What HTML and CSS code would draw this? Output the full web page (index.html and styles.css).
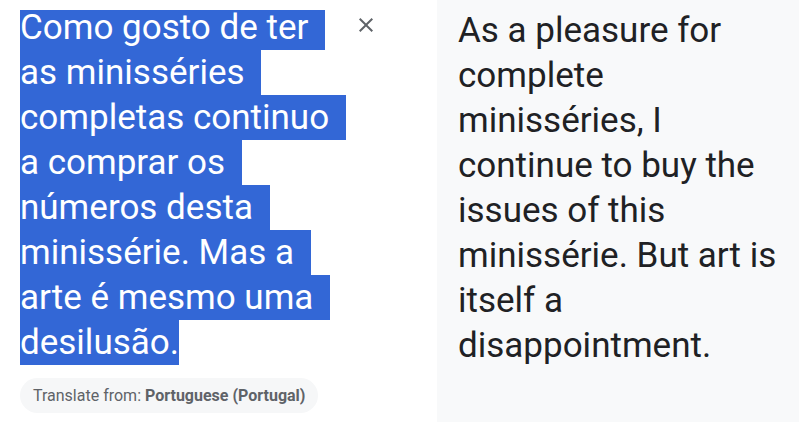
FILE: index.html
```html
<!DOCTYPE html>
<html>
<head>
<meta charset="utf-8">
<link rel="stylesheet" href="styles.css">
</head>
<body>
<div class="popup">
  <div class="source-pane">
    <div class="source-row">
      <div class="source-text">
        <span class="line sp">Como gosto de ter </span>
        <span class="line sp">as minisséries </span>
        <span class="line sp">completas continuo </span>
        <span class="line sp">a comprar os </span>
        <span class="line sp">números desta </span>
        <span class="line sp">minissérie. Mas a </span>
        <span class="line sp">arte é mesmo uma </span>
        <span class="line">desilusão.</span>
      </div>
      <button class="close" aria-label="Close">
        <svg width="24" height="24" viewBox="0 0 24 24"><path d="M19 6.41 17.59 5 12 10.59 6.41 5 5 6.41 10.59 12 5 17.59 6.41 19 12 13.41 17.59 19 19 17.59 13.41 12z" fill="#5f6368"/></svg>
      </button>
    </div>
    <div class="chip">Translate from: <b>Portuguese (Portugal)</b></div>
  </div>
  <div class="target-pane">
    <p class="target-text">As a pleasure for complete minisséries, I continue to buy the issues of this minissérie. But art is itself a disappointment.</p>
  </div>
</div>
</body>
</html>
```

FILE: styles.css
```css
html, body {
  margin: 0;
  padding: 0;
  background: #ffffff;
}
body {
  font-family: Roboto, "Noto Sans", sans-serif;
  width: 799px;
  height: 422px;
  overflow: hidden;
}
.popup {
  display: flex;
  height: 422px;
}
.source-pane {
  width: 437px;
  flex: none;
  display: flex;
  flex-direction: column;
  padding: 5px 0 0 20px;
  box-sizing: border-box;
}
.source-row {
  display: flex;
  align-items: flex-start;
}
.source-text {
  width: 334px;
  flex: none;
  font-size: 35px;
  line-height: 45px;
  color: #ffffff;
}
.line {
  display: block;
  width: fit-content;
  white-space: pre;
  background: #3367d6;
}
.line.sp {
  padding-right: 8px;
}
.line:first-child {
  background: linear-gradient(transparent 5px, #3367d6 5px);
}
.close {
  margin: 8px 0 0 0;
  width: 24px;
  height: 24px;
  padding: 0;
  border: 0;
  background: none;
  display: flex;
  align-items: center;
  justify-content: center;
}
.chip {
  align-self: flex-start;
  margin-top: 13px;
  height: 35px;
  line-height: 35px;
  padding: 0 13px;
  border-radius: 18px;
  background: #f6f7f8;
  font-size: 16px;
  color: #5f6368;
  white-space: nowrap;
}
.chip b {
  font-weight: 700;
  color: #5f6368;
}
.target-pane {
  flex: 1;
  background: #f8f9fa;
  padding: 8px 20px 0 21px;
}
.target-text {
  margin: 0;
  font-size: 35px;
  line-height: 45px;
  color: #202124;
}
```
